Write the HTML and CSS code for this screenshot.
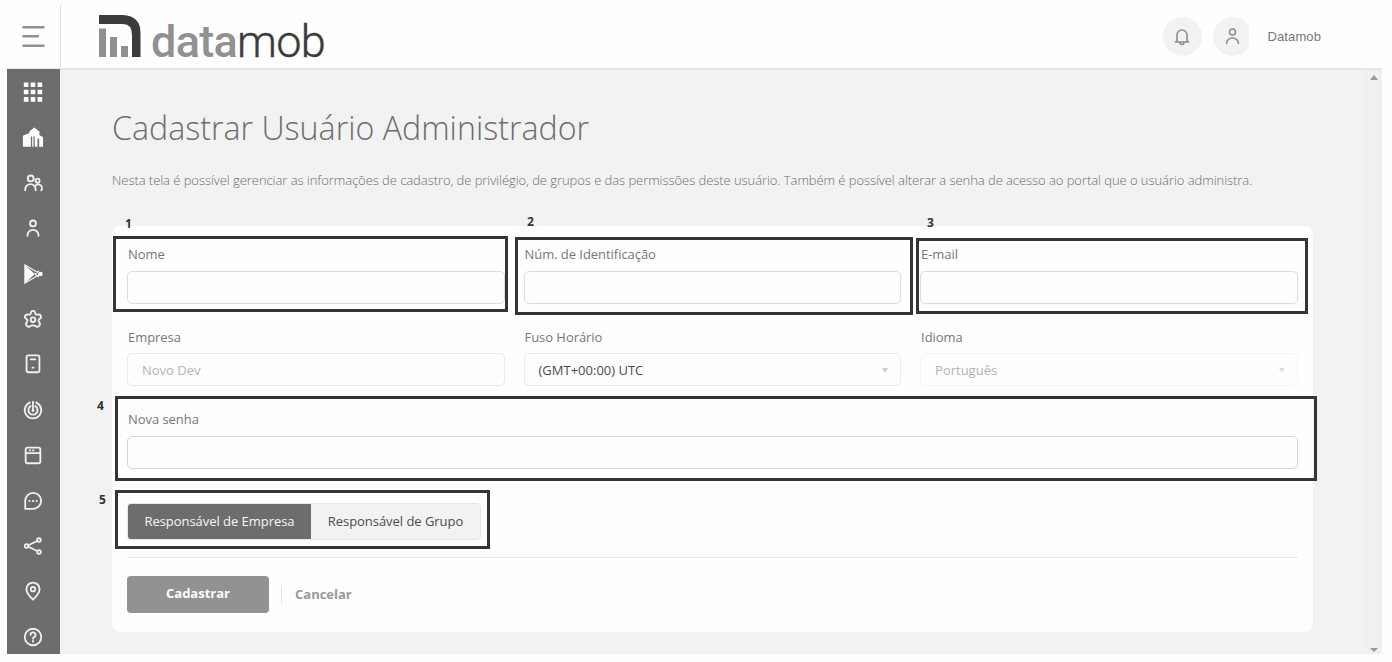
FILE: index.html
```html
<!DOCTYPE html>
<html lang="pt-BR">
<head>
<meta charset="utf-8">
<title>Datamob</title>
<link rel="stylesheet" href="styles.css">
</head>
<body>
<div class="app">
  <header class="header">
    <div class="menu"><svg width="24" height="24" viewBox="0 0 24 24"><path d="M2.500 2.200h20M2.500 11.200h14.500M2.500 20.700h20"/></svg></div>
    <div class="brand">
      <svg class="mark" width="42" height="43" viewBox="0 0 42 43"><path class="dark" d="M0 0H24Q41.500 1 41.500 18V42H33V20Q33 9 24 9H0z"/><path class="mid" d="M0 13.500h7V42H0zM11 22h7v20h-7zM22 31h7v11h-7z"/></svg>
      <div class="wordmark"><span class="data">data</span><span class="mob">mob</span></div>
    </div>
    <div class="user">
      <div class="round"><svg width="18" height="18" viewBox="0 0 18 18"><path d="M4 13V7a5 5 0 0 1 10 0v6l1.500 1H2.500zM7 14.500a2 2 0 0 0 4 0"/></svg></div>
      <div class="clip"><div class="round avatar"><svg width="18" height="18" viewBox="0 0 18 18"><circle cx="9.500" cy="4" r="3"/><path d="M3.500 15.500a6 5.500 0 0 1 12 0"/></svg></div></div>
      <span class="name">Datamob</span>
    </div>
  </header>
  <div class="body">
    <nav class="side">
      <svg viewBox="0 0 24 24"><path class="fill" d="M2 1.500h5v5H2zM9.500 1.500h5v5h-5zM17 1.500h5v5h-5zM2 9.500h5v5H2zM9.500 9.500h5v5h-5zM17 9.500h5v5h-5zM2 17.500h5v5H2zM9.500 17.500h5v5h-5zM17 17.500h5v5h-5z"/></svg>
      <svg viewBox="0 0 24 24"><path class="fill" d="M1 22.500V10.500L8 7.500V6l5.500-4.500L19 6v4l4 2v10.500h-4.300v-9h-1.800v9h-3v-11h-1.400v11h-1.400V11.500H9.700v11z"/></svg>
      <svg viewBox="0 0 24 24"><circle cx="9.500" cy="7" r="3.200"/><circle cx="17" cy="9.500" r="2.200"/><path d="M3.500 20v-1a5.700 5.700 0 0 1 11.400 0v1M14.500 15.200a4 4 0 0 1 6.500 4.800"/></svg>
      <svg viewBox="0 0 24 24"><circle cx="12" cy="7" r="3.200"/><path d="M6 20.500V20a6 6 0 0 1 12 0v.5"/></svg>
      <svg viewBox="0 0 24 24"><path class="fill" d="M2.500 1.500L14 12 2.500 22.500z"/><path class="thin" d="M3 2l17 10L3 22M14 12l4-3M14 12l4 3"/><circle class="fill" cx="20" cy="12" r="2.500"/></svg>
      <svg viewBox="0 0 24 24"><path d="M9.600 5.600Q9.900 3.200 12 3.200T14.400 5.600Q14.600 7.600 16.800 7.200Q20 6.600 20.700 8.700T19.100 11.900Q17.200 13.200 18.600 15Q20.400 17.600 18.900 19.400T15.300 20Q12 17.900 8.700 20Q6.600 21.200 5.100 19.400T5.400 15Q6.800 13.200 4.900 11.900Q2.700 10.700 3.300 8.700T7.200 7.200Q9.400 7.600 9.600 5.600z"/><circle cx="12" cy="12.800" r="2.500"/></svg>
      <svg viewBox="0 0 24 24"><rect x="5" y="2.500" width="14" height="18.500" rx="2"/><path d="M9.500 7h5M11.500 16h1"/></svg>
      <svg viewBox="0 0 24 24"><path d="M12 3v9.500M8.500 3.900a9 9 0 1 0 7 0M9.500 7.800a5 5 0 1 0 5 0"/><circle class="fill" cx="12" cy="12.500" r="1.500"/></svg>
      <svg viewBox="0 0 24 24"><rect x="4" y="4" width="16" height="17" rx="2"/><path d="M4 10h16M8.500 7h.5M12 7h.5"/></svg>
      <svg viewBox="0 0 24 24"><path d="M3.500 20.500V12a8.700 8.700 0 1 1 8.700 8.500z"/><path d="M8 12h.3M11.900 12h.3M15.800 12h.3"/></svg>
      <svg viewBox="0 0 24 24"><circle cx="5" cy="12" r="2"/><circle cx="18.500" cy="5.500" r="2"/><circle cx="18.500" cy="18.500" r="2"/><path d="M7 11.200l9.500-4.700M7 12.800l9.500 4.700"/></svg>
      <svg viewBox="0 0 24 24"><path d="M12 21.500C8 17.500 4.800 14 4.800 10a7.200 7.200 0 0 1 14.400 0c0 4-3.200 7.500-7.200 11.500z"/><circle cx="12" cy="10" r="2.400"/></svg>
      <svg viewBox="0 0 24 24"><circle cx="12" cy="12" r="9"/><path d="M9.300 9.700a2.700 2.700 0 1 1 3.900 2.400c-.8.400-1.200.8-1.200 1.700M12 16.400v.8"/></svg>
    </nav>
    <main class="main">
      <h1 class="title">Cadastrar Usuário Administrador</h1>
      <p class="desc">Nesta tela é possível gerenciar as informações de cadastro, de privilégio, de grupos e das permissões deste usuário. Também é possível alterar a senha de acesso ao portal que o usuário administra.</p>
      <form class="card">
        <div class="row">
          <div class="field"><label>Nome</label><div class="input"></div></div>
          <div class="field"><label>Núm. de Identificação</label><div class="input"></div></div>
          <div class="field"><label>E-mail</label><div class="input"></div></div>
        </div>
        <div class="row second">
          <div class="field"><label>Empresa</label><div class="input off">Novo Dev</div></div>
          <div class="field"><label>Fuso Horário</label><div class="input select">(GMT+00:00) UTC<i class="caret"></i></div></div>
          <div class="field"><label>Idioma</label><div class="input select off faint">Português<i class="caret"></i></div></div>
        </div>
        <div class="field third"><label>Nova senha</label><div class="input strong"></div></div>
        <div class="toggle"><span class="opt on">Responsável de Empresa</span><span class="opt">Responsável de Grupo</span></div>
        <div class="actions"><span class="submit">Cadastrar</span><span class="cancel">Cancelar</span></div>
      </form>
    </main>
    <div class="scroll"><i class="up"></i><i class="down"></i></div>
  </div>
</div>
<div class="mark-box b1"></div><div class="mark-box b2"></div><div class="mark-box b3"></div><div class="mark-box b4"></div><div class="mark-box b5"></div>
<b class="num n1">1</b><b class="num n2">2</b><b class="num n3">3</b><b class="num n4">4</b><b class="num n5">5</b>
</body>
</html>
```
FILE: styles.css
```css
* { box-sizing: border-box; }
body { margin: 0; padding: 5px 10px 8px 7px; height: 662px; overflow: hidden; background: #fefefe; font-family: "Open Sans", sans-serif; font-size: 13px; color: #777; }
svg { fill: none; stroke-linecap: round; stroke-linejoin: round; }
.app { height: 649px; display: flex; flex-direction: column; }
.header { height: 65px; flex: none; display: flex; border-bottom: 2px solid #e6e6e6; }
.menu { width: 54px; border-right: 1px solid #e0e0e0; padding: 20px 0 0 14px; }
.menu svg { stroke: #919191; stroke-width: 2.500; }
.brand { display: flex; flex: 1; padding: 10px 0 0 38px; }
.dark { fill: #3b3b3b; }
.mid { fill: #8f8f8f; }
.wordmark { font: 45px/46px Roboto, sans-serif; margin: 4px 0 0 10px; color: #919191; white-space: nowrap; letter-spacing: -.700px; }
.data { font-weight: 500; }
.mob { font-weight: 300; color: #3b3b3b; -webkit-text-stroke: .4px #3b3b3b; }
.user { display: flex; align-items: flex-start; padding: 12px 61px 0 0; }
.round { width: 39px; height: 39px; border-radius: 50%; background: #f2f2f2; display: flex; align-items: center; justify-content: center; flex: none; }
.round svg { stroke: #8e8e8e; stroke-width: 1.600; }
.clip { width: 36px; overflow: hidden; margin: 0 19px 0 11px; }
.name { font: 13px/40px "Liberation Sans", Arial, sans-serif; color: #777; letter-spacing: .1px; }
.body { flex: 1; display: flex; min-height: 0; background: #f2f2f2; }
.side { width: 53px; margin-top: -1px; background: #6d6d6d; display: flex; flex-direction: column; align-items: center; padding: 12px 1px 0 0; gap: 23.400px; z-index: 1; overflow: hidden; }
.side svg { width: 22px; height: 22px; flex: none; stroke: #f0f0f0; stroke-width: 2; }
.side .fill { fill: #fff; stroke: none; }
.side .thin { stroke-width: 1.300; }
.main { flex: 1; padding: 34px 52px 0 52px; }
.title { margin: 0; font-size: 32.200px; line-height: 47px; font-weight: 300; color: #6d6d6d; white-space: nowrap; }
.desc { margin: 17px 0 0; line-height: 24px; font-weight: 300; color: #6d6d6d; white-space: nowrap; letter-spacing: -.056px; }
.card { margin-top: 34px; height: 406px; border-radius: 8px; background: #fefefe; padding: 16px 15px; }
.row { display: grid; grid-template-columns: repeat(3, 1fr); column-gap: 18.600px; }
.field label { display: block; line-height: 26px; margin-bottom: 3px; color: #777; padding-left: 1px; letter-spacing: -.05px; }
.row:not(.second) label { line-height: 25px; margin-bottom: 4px; }
.input { height: 33px; line-height: 32px; border: 1px solid #ddd; border-radius: 5px; padding-left: 14px; position: relative; color: #4a4a4a; }
.second { margin-top: 20px; }
.second .input { border-color: #e9e9e9; }
.input.off { color: #b3b3b3; }
.second .faint { border-color: #f5f5f5; }
.caret { position: absolute; right: 12px; top: 14px; border: 3.500px solid transparent; border-top: 5px solid #ccc; border-bottom: 0; }
.faint .caret { border-top-color: #ddd; }
.third { margin-top: 20px; }
.strong { border-color: #d6d6d6; margin-top: 4px; }
.third label { margin-bottom: 4px; }
.toggle { display: flex; width: 354px; height: 37px; margin-top: 34px; border: 1px solid #e7e7e7; border-radius: 4px; background: #f2f2f2; line-height: 34px; overflow: hidden; color: #4c4c4c; letter-spacing: -.04px; }
.opt { flex: 1; text-align: center; }
.opt.on { flex: none; width: 183px; background: #6d6d6d; color: #f7f7f7; }
.actions { margin-top: 17px; border-top: 1px solid #e6e6e6; padding-top: 18px; display: flex; align-items: center; font-weight: 700; }
.submit { width: 142px; height: 37px; line-height: 35px; border-radius: 4px; background: #929292; color: #fdfdfd; text-align: center; }
.cancel { margin-left: 12px; padding-left: 13px; border-left: 1px solid #e3e3e3; line-height: 16px; padding-bottom: 2px; color: #999; }
.scroll { width: 17px; background: #f0f0f0; display: flex; flex-direction: column; justify-content: space-between; align-items: center; padding: 5px 0 2px; }
.up { border: 4px solid transparent; border-bottom: 5px solid #999; border-top: 0; }
.down { border: 4px solid transparent; border-top: 4px solid #999; border-bottom: 0; }
.mark-box { position: absolute; border: 3px solid #353535; z-index: 3; }
.b1 { left: 113px; top: 236px; width: 395px; height: 76px; }
.b2 { left: 515px; top: 237px; width: 398px; height: 78px; }
.b3 { left: 916px; top: 238px; width: 392px; height: 76px; }
.b4 { left: 115px; top: 396px; width: 1202px; height: 85px; }
.b5 { left: 115px; top: 490px; width: 375px; height: 59px; }
.num { position: absolute; z-index: 3; font-size: 12px; line-height: 16px; color: #333; }
.n1 { left: 125px; top: 216px; }
.n2 { left: 527px; top: 214px; }
.n3 { left: 927px; top: 215px; }
.n4 { left: 97px; top: 398px; }
.n5 { left: 99px; top: 492px; }
```
